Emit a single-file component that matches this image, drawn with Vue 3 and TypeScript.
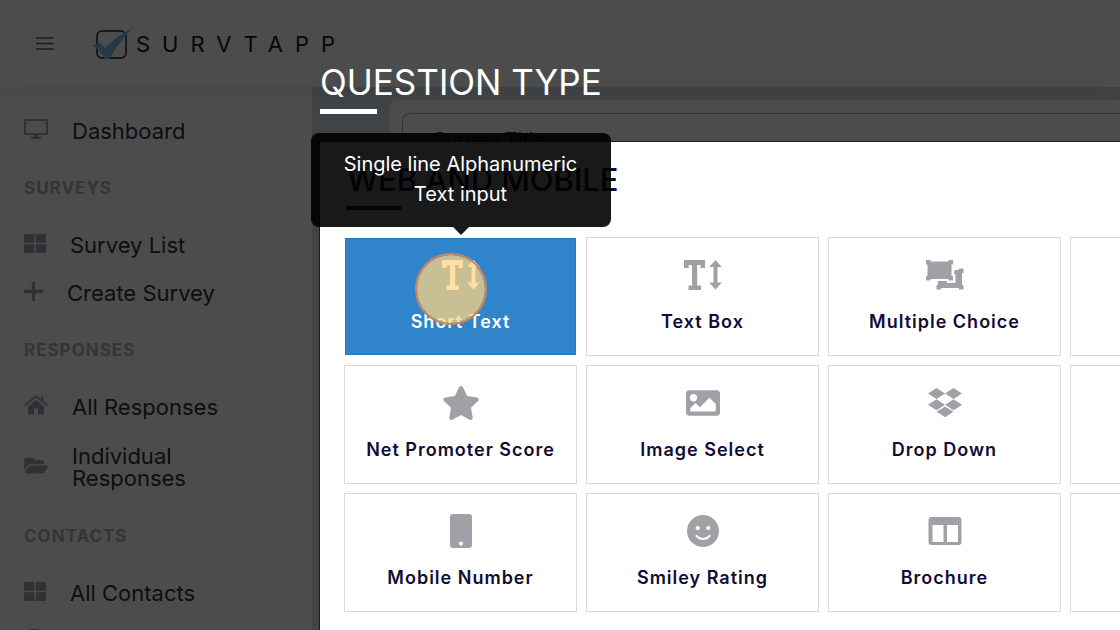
<script setup lang="ts">
type NavItem = { label: string; icon: string; narrow?: boolean }
type NavGroup = { title?: string; items: NavItem[] }
type QuestionType = { label: string; icon: string; hint?: string }

const groups: NavGroup[] = [
  { items: [{ label: 'Dashboard', icon: 'desktop' }] },
  {
    title: 'SURVEYS',
    items: [
      { label: 'Survey List', icon: 'grid' },
      { label: 'Create Survey', icon: 'plus' },
    ],
  },
  {
    title: 'RESPONSES',
    items: [
      { label: 'All Responses', icon: 'home' },
      { label: 'Individual Responses', icon: 'folder', narrow: true },
    ],
  },
  {
    title: 'CONTACTS',
    items: [
      { label: 'All Contacts', icon: 'grid' },
      { label: '', icon: 'file' },
    ],
  },
]

const types: QuestionType[] = [
  { label: 'Short Text', icon: 'text', hint: 'Single line Alphanumeric Text input' },
  { label: 'Text Box', icon: 'text' },
  { label: 'Multiple Choice', icon: 'group' },
  { label: '', icon: '' },
  { label: 'Net Promoter Score', icon: 'star' },
  { label: 'Image Select', icon: 'image' },
  { label: 'Drop Down', icon: 'dropbox' },
  { label: '', icon: '' },
  { label: 'Mobile Number', icon: 'mobile' },
  { label: 'Smiley Rating', icon: 'smile' },
  { label: 'Brochure', icon: 'columns' },
  { label: '', icon: '' },
]
</script>

<template>
  <div class="page">
    <header class="topbar">
      <button class="burger" type="button" aria-label="Toggle menu">
        <svg width="18" height="13" viewBox="0 0 18 13"><path d="M0 1h18M0 6.500h18M0 12h18" stroke="#5c5f66" stroke-width="1.300" /></svg>
      </button>
      <a class="brand" href="#">
        <svg width="42" height="32" viewBox="0 0 42 32">
          <rect x="5" y="3" width="29" height="27" rx="5" fill="none" stroke="#222" stroke-width="1.500" />
          <path d="M1 18l6-4 6 6C20 13 30 5 41 0 32 8 24 20 17 31h-4C10 26 6 21 1 18z" fill="#78bdec" />
        </svg>
        <span>SURVTAPP</span>
      </a>
    </header>

    <div class="body">
      <nav class="sidebar">
        <section v-for="(g, gi) in groups" :key="gi">
          <h2 v-if="g.title">{{ g.title }}</h2>
          <a v-for="(it, ii) in g.items" :key="ii" href="#" class="nav" :aria-label="it.label || 'Files'">
            <svg v-if="it.icon === 'desktop'" width="24" height="20" viewBox="0 0 24 20"><path fill-rule="evenodd" d="M1.500 0h21Q24 0 24 1.500v13q0 1.500-1.500 1.500h-8l.5 2h2v2H7v-2h2l.5-2h-8Q0 16 0 14.500v-13Q0 0 1.500 0zM2 2v12h20V2z" /></svg>
            <svg v-else-if="it.icon === 'grid'" width="22" height="19" viewBox="0 0 22 19"><path d="M0 0h10.300v8.800H0zM11.700 0H22v8.800H11.700zM0 10.200h10.300V19H0zM11.700 10.200H22V19H11.700z" /></svg>
            <svg v-else-if="it.icon === 'plus'" width="19" height="19" viewBox="0 0 19 19"><path d="M7.800 0h3.400v7.800H19v3.400h-7.800V19H7.800v-7.800H0V7.800h7.800z" /></svg>
            <svg v-else-if="it.icon === 'home'" width="24" height="20" viewBox="0 0 24 20"><path d="M12 5l8 6.600V18.500q0 1-1 1h-5v-6h-4v6H5q-1 0-1-1v-6.900z" /><path d="M.8 10.500L12 1.300l11.200 9.200M18.300 1v5" fill="none" stroke="#a0a4ae" stroke-width="1.900" /></svg>
            <svg v-else-if="it.icon === 'folder'" width="24" height="21" viewBox="0 0 576 512"><path d="M572.694 292.093L500.270 416.248A63.997 63.997 0 0 1 444.989 448H45.025c-18.523 0-30.064-20.093-20.731-36.093l72.424-124.155A64 64 0 0 1 152 256h399.964c18.523 0 30.064 20.093 20.730 36.093zM152 224h328v-48c0-26.510-21.490-48-48-48H272l-64-64H48C21.490 64 0 85.490 0 112v278.046l69.077-118.418C86.214 242.250 117.989 224 152 224z" /></svg>
            <svg v-else class="file" width="15" height="20" viewBox="0 0 15 20"><path d="M1 0h8v6h6v14H0V1zM10 0l5 5h-5z" /></svg>
            <span :class="{ narrow: it.narrow }">{{ it.label }}</span>
          </a>
        </section>
      </nav>

      <main class="workspace">
        <div class="survey">
          <div class="survey-title">Survey Title</div>
        </div>
      </main>
    </div>

    <div class="backdrop">
      <section class="dialog" role="dialog" aria-labelledby="dialog-title">
        <h1 id="dialog-title">QUESTION TYPE</h1>
        <div class="panel">
          <h2>WEB AND MOBILE</h2>
          <ul class="types">
            <li v-for="(t, i) in types" :key="i">
              <button type="button" class="type" :class="{ active: i === 0 }" :aria-label="t.label || 'Other type'">
                <span class="glyph">
                  <svg v-if="t.icon === 'text'" width="38" height="30" viewBox="0 0 38 30">
                    <path d="M0 0h21v8h-4.500V5H13.200v20.500H17V30H4.500v-4.500H8V5H4.700v3H0z" />
                    <path d="M31.500 0l6.300 7h-4.300v15.500h4.300L31.500 29.500l-6.300-7h4.300V7h-4.300z" />
                  </svg>
                  <svg v-else-if="t.icon === 'group'" width="38" height="30" viewBox="0 0 38 30">
                    <path d="M0 0h4.500v1.500h18V0H27v4.500h-1.500V16H27v4.500h-4.500V19h-18v1.500H0V16h1.500V4.500H0z" />
                    <path d="M28.500 10h4.500V8.500h4.500V13H36v12h1.500v4.500H33V28H15v1.500h-4.500V25H12v-4h9v2h8.500v-8.500h-1.500z" />
                  </svg>
                  <svg v-else-if="t.icon === 'star'" width="38" height="34" viewBox="0 0 576 512"><path d="M259.300 17.800L194 150.200 47.900 171.500c-26.200 3.800-36.700 36.100-17.700 54.600l105.700 103-25 145.500c-4.500 26.300 23.200 46 46.400 33.700L288 439.600l130.700 68.700c23.200 12.200 50.900-7.400 46.400-33.700l-25-145.500 105.700-103c19-18.500 8.500-50.800-17.700-54.600L382 150.200 316.700 17.800c-11.700-23.600-45.600-23.900-57.400 0z" /></svg>
                  <svg v-else-if="t.icon === 'image'" width="34" height="34" viewBox="0 0 512 512"><path d="M464 448H48c-26.510 0-48-21.490-48-48V112c0-26.510 21.490-48 48-48h416c26.510 0 48 21.490 48 48v288c0 26.510-21.490 48-48 48zM112 120c-30.928 0-56 25.072-56 56s25.072 56 56 56 56-25.072 56-56-25.072-56-56-56zM64 384h384V272l-87.515-87.515c-4.686-4.686-12.284-4.686-16.971 0L208 320l-55.515-55.515c-4.686-4.686-12.284-4.686-16.971 0L64 336v48z" /></svg>
                  <svg v-else-if="t.icon === 'dropbox'" width="34" height="30" viewBox="0 0 34 30"><path d="M8.500 0L17 5.500 8.500 11 0 5.500zM25.500 0L34 5.500 25.500 11 17 5.500zM8.500 11.200L17 16.700l-8.500 5.500L0 16.700zM25.500 11.200L34 16.700l-8.500 5.500-8.500-5.500zM17 18.400l8.500 5.400L17 29.300l-8.500-5.500z" /></svg>
                  <svg v-else-if="t.icon === 'mobile'" width="22" height="34" viewBox="0 0 22 34"><path fill-rule="evenodd" d="M3 0h16q3 0 3 3v28q0 3-3 3H3q-3 0-3-3V3q0-3 3-3zM11 27.500a2.100 2.100 0 1 0 0 4.200 2.100 2.100 0 0 0 0-4.200z" /></svg>
                  <svg v-else-if="t.icon === 'smile'" width="32" height="32" viewBox="0 0 32 32">
                    <circle cx="16" cy="16" r="16" />
                    <circle cx="10.800" cy="13" r="2.100" fill="#fff" /><circle cx="21.200" cy="13" r="2.100" fill="#fff" />
                    <path d="M9.500 20.800c3.400 4.200 9.600 4.200 13 0" fill="none" stroke="#fff" stroke-width="2" stroke-linecap="round" />
                  </svg>
                  <svg v-else-if="t.icon === 'columns'" width="34" height="30" viewBox="0 0 34 30"><path fill-rule="evenodd" d="M3.500 1h27Q33.500 1 33.500 4v22q0 3-3 3h-27q-3 0-3-3V4q0-3 3-3zM4.500 9v17h11V9zM19 9v17h11V9z" /></svg>
                </span>
                <span>{{ t.label }}</span>
              </button>
              <template v-if="t.hint">
                <span class="pulse"></span>
                <span class="hint" role="tooltip">{{ t.hint }}</span>
              </template>
            </li>
          </ul>
        </div>
      </section>
    </div>
  </div>
</template>

<style>
body {
  margin: 0;
}
</style>

<style scoped>
.page {
  position: relative;
  height: 100vh;
  overflow: hidden;
  display: flex;
  flex-direction: column;
  background: #fff;
  color: #2e323c;
  font-family: Inter, "Liberation Sans", sans-serif;
}
h1,
h2,
ul {
  margin: 0;
  padding: 0;
  list-style: none;
}
svg {
  display: block;
  flex: none;
}
.topbar {
  position: relative;
  z-index: 1;
  flex: none;
  height: 87px;
  display: flex;
  align-items: center;
  padding-left: 36px;
  gap: 38px;
  background: #fff;
  box-shadow: 0 1px 24px rgba(0, 0, 0, 0.12);
}
.burger {
  border: 0;
  padding: 0;
  background: none;
}
.brand {
  display: flex;
  align-items: center;
  gap: 2px;
  color: #16181c;
  text-decoration: none;
  font-size: 22px;
  letter-spacing: 12px;
}
.body {
  flex: 1;
  min-height: 0;
  display: flex;
}
.sidebar {
  flex: none;
  width: 288px;
  padding: 20px 0 0 24px;
}
.sidebar h2 {
  font-size: 17px;
  line-height: 66px;
  font-weight: 700;
  letter-spacing: 1px;
  color: #b0b2b8;
}
.nav {
  display: flex;
  align-items: center;
  gap: 24px;
  min-height: 48px;
  box-sizing: border-box;
  padding: 11px 0;
  font-size: 22px;
  line-height: 22px;
  color: #2e323c;
  text-decoration: none;
}
.nav:has(.narrow) {
  padding: 14px 0;
}
.nav svg {
  margin-bottom: 4px;
  fill: #a0a4ae;
}
.nav .file {
  margin-left: 5px;
}
.narrow {
  max-width: 140px;
}
.workspace {
  flex: 1;
  min-width: 0;
  background: #d9e4ec;
  padding: 13px 0 0 78px;
}
.survey {
  height: 100%;
  background: #fff;
  border-radius: 8px 0 0 0;
  padding: 13px 0 0 12px;
}
.survey-title {
  border: 1px solid #b4b8c0;
  border-right: 0;
  border-radius: 8px 0 0 0;
  padding: 13px 30px;
  font-size: 20px;
  line-height: 26px;
}
.backdrop {
  position: absolute;
  inset: 0;
  z-index: 2;
  background: rgba(0, 0, 0, 0.7);
  display: flex;
}
.dialog {
  flex: 1;
  min-width: 0;
  margin-left: 320px;
  padding-top: 62px;
  display: flex;
  flex-direction: column;
}
.dialog h1 {
  color: #fff;
  font-size: 35px;
  font-weight: 400;
  line-height: 40px;
  white-space: nowrap;
}
.dialog h1::after {
  content: "";
  display: block;
  width: 57px;
  height: 5px;
  margin-top: 7px;
  background: #fff;
}
.panel {
  flex: 1;
  margin-top: 28px;
  padding: 20px 24px;
  background: #fff;
  color: #110b3a;
  box-shadow: 0 0 0 1px rgba(0, 0, 0, 0.6);
}
.panel h2 {
  margin-left: 3px;
  font-size: 31px;
  font-weight: 500;
  line-height: 36px;
  white-space: nowrap;
}
.panel h2::after {
  content: "";
  display: block;
  width: 54px;
  height: 4px;
  margin: 8px 0 27px;
  background: #110b3a;
}
.types {
  display: grid;
  grid-template-columns: repeat(4, minmax(233px, 1fr));
  gap: 9px;
}
.types li {
  position: relative;
}
.type {
  width: 100%;
  height: 119px;
  box-sizing: border-box;
  display: flex;
  flex-direction: column;
  align-items: center;
  gap: 16px;
  padding: 18px 0 0;
  border: 1px solid #d9dadd;
  background: #fff;
  color: #110b3a;
  font: 600 18px/24px Inter, "Liberation Sans", sans-serif;
  letter-spacing: 1px;
}
.glyph {
  height: 38px;
  display: flex;
  align-items: center;
  color: #9fa1a6;
}
.glyph svg {
  fill: currentColor;
}
.type.active {
  border-color: #fff;
  background: #2f84ca;
  box-shadow: inset 0 0 0 1px #2576ba;
  color: #fff;
}
.active .glyph {
  color: #fff;
}
.pulse {
  position: absolute;
  left: 71px;
  top: 16px;
  width: 68px;
  height: 68px;
  border: 2px solid #c8875f;
  border-radius: 50%;
  background: rgba(255, 212, 130, 0.74);
  background-clip: padding-box;
}
.hint {
  position: absolute;
  left: 50%;
  bottom: calc(100% + 10px);
  transform: translateX(-50%);
  width: 300px;
  box-sizing: border-box;
  padding: 16px 28px 18px;
  border-radius: 8px;
  background: rgba(0, 0, 0, 0.9);
  color: #fff;
  font-size: 20px;
  line-height: 30px;
  text-align: center;
}
.hint::after {
  content: "";
  position: absolute;
  left: 50%;
  top: 100%;
  margin-left: -8px;
  border: 8px solid transparent;
  border-bottom: 0;
  border-top-color: rgba(0, 0, 0, 0.9);
}
</style>
